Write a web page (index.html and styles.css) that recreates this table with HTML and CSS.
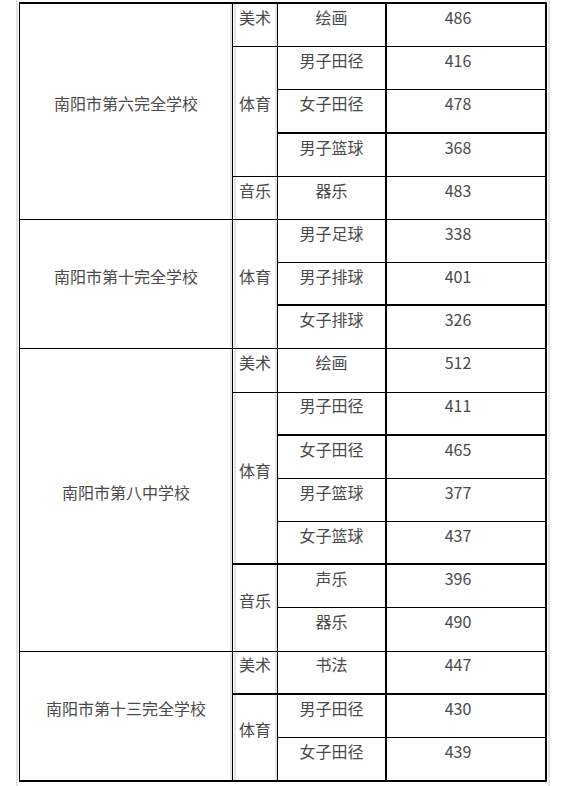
FILE: index.html
```html
<!DOCTYPE html>
<html lang="zh-CN">
<head>
<meta charset="utf-8">
<title>南阳市学校表</title>
<link rel="stylesheet" href="styles.css">
</head>
<body>
<div class="page">
  <div class="sheet">
    <div class="c1 r5">南阳市第六完全学校</div>
    <div class="c2">美术</div><div class="c3">绘画</div><div class="c4">486</div>
    <div class="c2 r3">体育</div><div class="c3">男子田径</div><div class="c4">416</div>
    <div class="c3 tb">女子田径</div><div class="c4 tb">478</div>
    <div class="c3">男子篮球</div><div class="c4">368</div>
    <div class="c2">音乐</div><div class="c3">器乐</div><div class="c4">483</div>

    <div class="c1 r3">南阳市第十完全学校</div>
    <div class="c2 r3">体育</div><div class="c3">男子足球</div><div class="c4">338</div>
    <div class="c3 tb">男子排球</div><div class="c4 tb">401</div>
    <div class="c3">女子排球</div><div class="c4">326</div>

    <div class="c1 r7">南阳市第八中学校</div>
    <div class="c2">美术</div><div class="c3">绘画</div><div class="c4">512</div>
    <div class="c2 r4 tb">体育</div><div class="c3 tb">男子田径</div><div class="c4 tb">411</div>
    <div class="c3">女子田径</div><div class="c4">465</div>
    <div class="c3">男子篮球</div><div class="c4">377</div>
    <div class="c3 tb">女子篮球</div><div class="c4 tb">437</div>
    <div class="c2 r2">音乐</div><div class="c3">声乐</div><div class="c4">396</div>
    <div class="c3">器乐</div><div class="c4">490</div>

    <div class="c1 r3">南阳市第十三完全学校</div>
    <div class="c2 tb">美术</div><div class="c3 tb">书法</div><div class="c4 tb">447</div>
    <div class="c2 r2">体育</div><div class="c3">男子田径</div><div class="c4">430</div>
    <div class="c3">女子田径</div><div class="c4">439</div>
  </div>
</div>
</body>
</html>
```

FILE: styles.css
```css
html, body {
  margin: 0;
  padding: 0;
  background: #ffffff;
  overflow: hidden;
}

.page {
  box-sizing: border-box;
  width: 534px;
  height: 786px;
  margin-left: 16px;
  padding: 2px 1px 0 1px;
  border-left: 2px solid #e2e2e2;
  border-right: 2px solid #e2e2e2;
}

.sheet {
  box-sizing: border-box;
  width: 528px;
  height: 780px;
  display: grid;
  grid-template-columns: 213px 45px 109px 159px;
  grid-template-rows: repeat(18, 1fr);
  border-top: 2px solid #000;
  border-left: 1px solid #000;
  border-right: 1px solid #000;
  border-bottom: 1px solid #000;
  font-family: "Noto Sans CJK SC", "Noto Sans", sans-serif;
  font-size: 16px;
  line-height: 18px;
  color: #4a4a4a;
}

.sheet > div {
  box-sizing: border-box;
  display: flex;
  align-items: center;
  justify-content: center;
  padding-bottom: 16px;
  border-right: 1px solid #000;
  border-bottom: 1px solid #000;
  white-space: nowrap;
}

.c1 {
  grid-column: 1;
  background: linear-gradient(to left, #e6e6e6 0, #e6e6e6 2px, transparent 2px);
}

.c2 {
  grid-column: 2;
  background:
    linear-gradient(to right, transparent 1px, #e6e6e6 1px, #e6e6e6 3px, transparent 3px),
    linear-gradient(to left, #e6e6e6 0, #e6e6e6 2px, transparent 2px);
}

.c3 {
  grid-column: 3;
  border-right-width: 2px !important;
}

.c4 {
  grid-column: 4;
  padding-right: 16px;
}

.r2 { grid-row: span 2; }
.r3 { grid-row: span 3; }
.r4 { grid-row: span 4; }
.r5 { grid-row: span 5; }
.r7 { grid-row: span 7; }

.tb {
  border-bottom-width: 2px !important;
}
```
